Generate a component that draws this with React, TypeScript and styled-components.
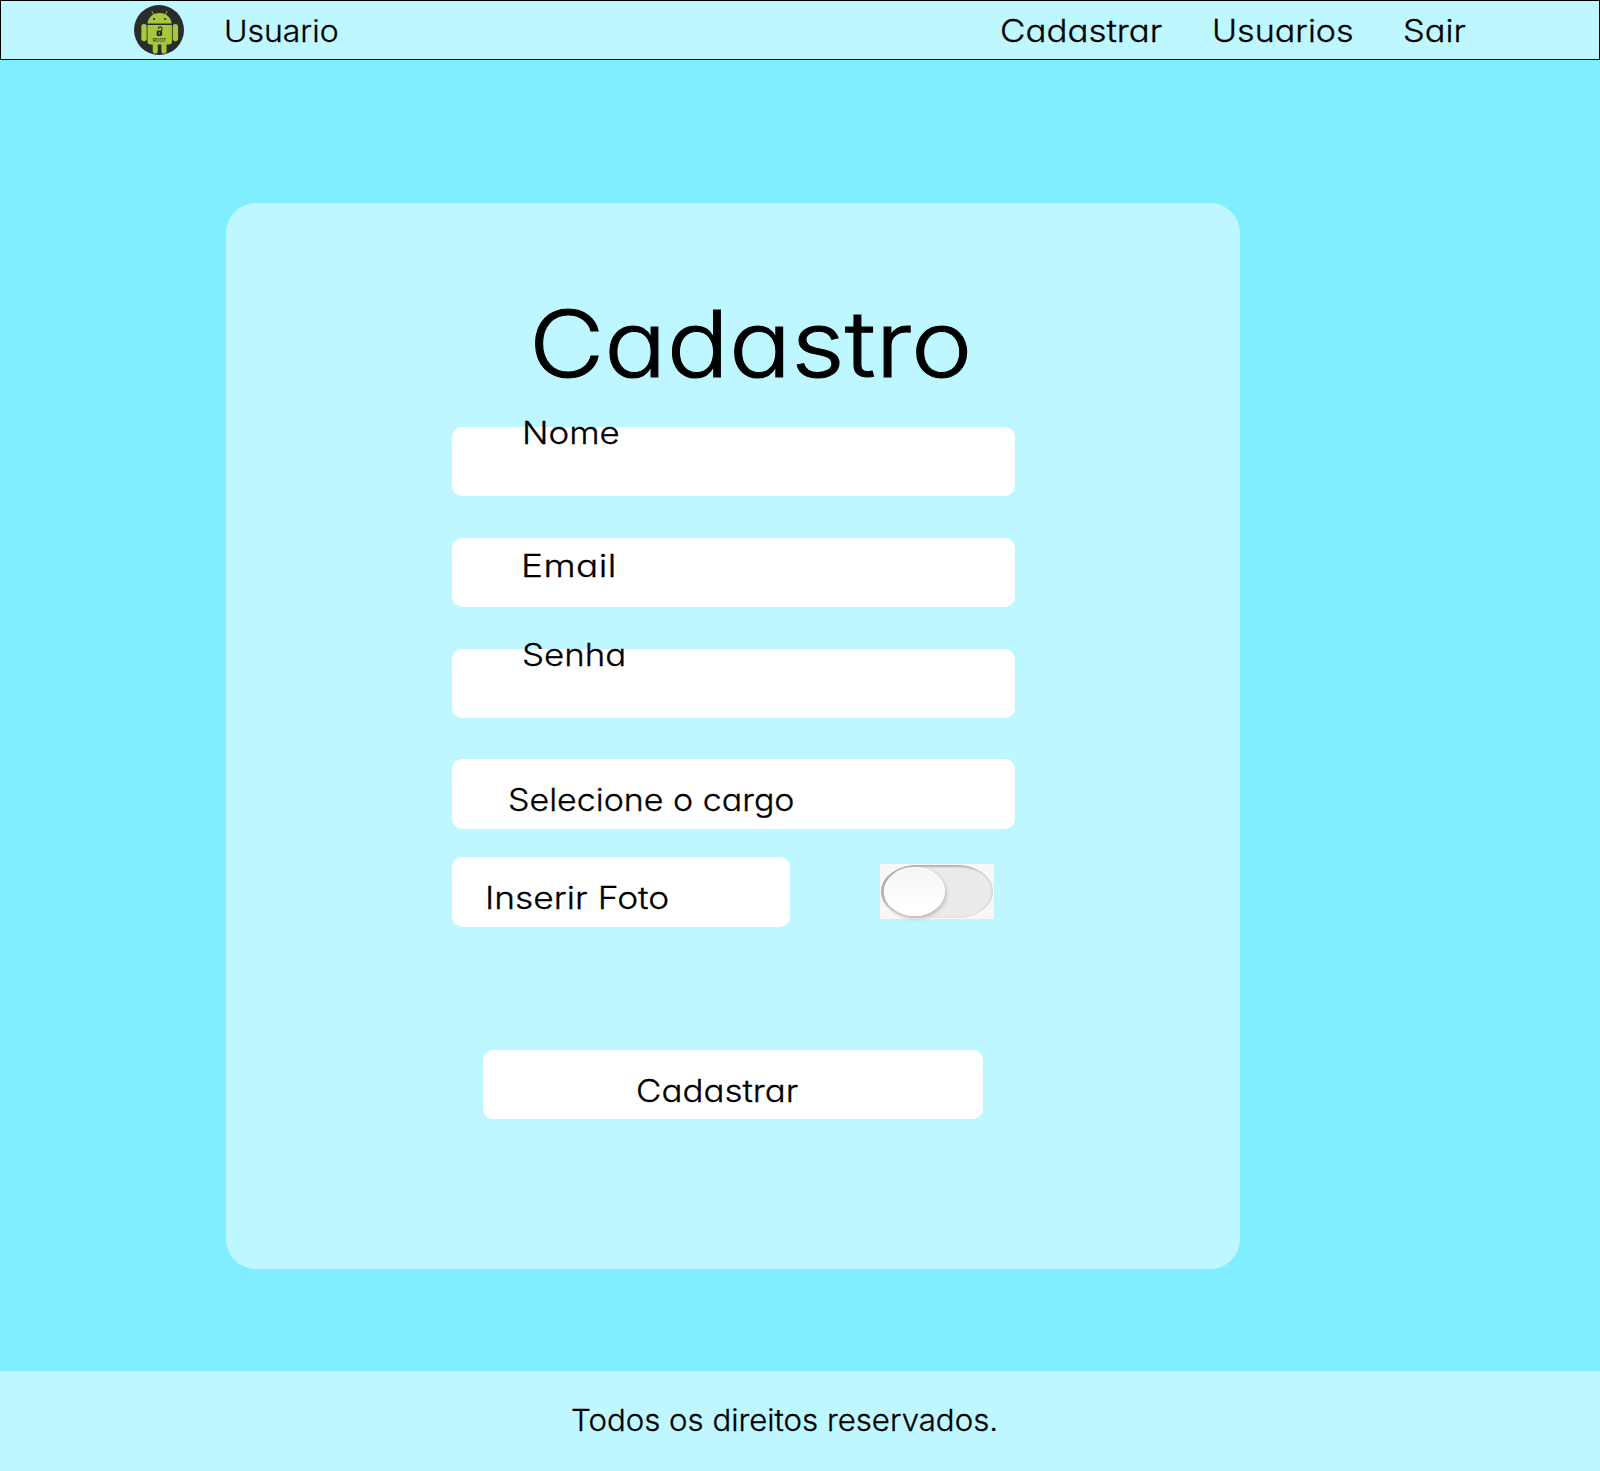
import React from "react";
import styled, { createGlobalStyle } from "styled-components";

const GlobalStyle = createGlobalStyle`
  *, *::before, *::after { box-sizing: border-box; }
  body {
    margin: 0;
    background: #80eeff;
    color: #000;
    font-family: Inter, "Open Sans", sans-serif;
  }
`;

const Page = styled.div`
  display: flex;
  flex-direction: column;
  width: 1600px;
  height: 1471px;
  background: #80eeff;
`;

const Text = styled.span<{ $spacing?: number; $stretch?: number; $alt?: boolean }>`
  display: block;
  font-size: ${(p) => (p.$alt === false ? 30 : 31)}px;
  font-weight: 300;
  -webkit-text-stroke: 0.3px currentColor;
  line-height: 40px;
  white-space: nowrap;
  font-feature-settings: ${(p) => (p.$alt === false ? "normal" : '"cv11" 1')};
  letter-spacing: ${(p) => p.$spacing ?? 0}px;
  transform: scaleX(${(p) => p.$stretch ?? 1.125});
  transform-origin: left center;
`;

const Header = styled.header`
  display: flex;
  align-items: flex-start;
  flex: none;
  height: 60px;
  padding-left: 133px;
  border: 1px solid #000;
  background: #bef7ff;
`;

const Avatar = styled.svg`
  flex: none;
  width: 50px;
  height: 50px;
  margin-top: 4px;
`;

const UserName = styled.div`
  width: 775.5px;
  margin: 10px 0 0 40px;
`;

const Nav = styled.nav`
  display: grid;
  grid-template-columns: 212px 191.5px auto;
  margin-top: 10px;
`;

const NavLink = styled.a`
  color: inherit;
  text-decoration: none;
`;

const Main = styled.main`
  flex: 1;
  padding: 143px 0 0 226px;
`;

const Card = styled.form`
  width: 1014px;
  height: 1066px;
  padding: 86px 225px 0 226px;
  border-radius: 30px;
  background: #bef7ff;
`;

const Title = styled.h1`
  height: 110px;
  margin: 0 0 28px 77px;
  font-size: 92px;
  font-weight: 300;
  -webkit-text-stroke: 1px currentColor;
  line-height: 110px;
  white-space: nowrap;
  font-feature-settings: "cv11" 1;
  transform: scaleX(1.125);
  transform-origin: left center;
`;

const Field = styled.div<{ $indent: number; $top: number; $gap: number; $height?: number }>`
  display: flex;
  align-items: flex-start;
  height: ${(p) => p.$height ?? 69}px;
  margin-bottom: ${(p) => p.$gap}px;
  padding-left: ${(p) => p.$indent}px;
  border-radius: 10px;
  background: #fff;

  > span { margin-top: ${(p) => p.$top}px; }
`;

const PhotoRow = styled.div`
  display: grid;
  grid-template-columns: 338px 114px;
  column-gap: 90px;
  height: 193px;
`;

const Toggle = styled.div`
  width: 114px;
  height: 55px;
  margin-top: 7px;
  padding: 1px;
  background: #f8f8f8;
`;

const Track = styled.div`
  height: 53px;
  padding: 2px 0 0 3px;
  border-radius: 37px / 27px;
  background: #ebebeb;
  box-shadow: inset 3px 2px 2px #b0b0b0, inset -1px 0 2px #cfcfcf;
`;

const Knob = styled.div`
  width: 61px;
  height: 49px;
  border: 1px solid #fff;
  border-radius: 50%;
  background: linear-gradient(#f5f5f5, #ffffff 75%);
  box-shadow: 1px 2px 4px #b4b4b4;
`;

const Submit = styled.button`
  display: block;
  width: 500px;
  height: 69px;
  margin-left: 31px;
  padding: 21px 0 0 153px;
  border: 0;
  border-radius: 10px;
  background: #fff;
  color: inherit;
  font-family: inherit;
  text-align: left;

  > span { height: 48px; }
`;

const Footer = styled.footer`
  flex: none;
  height: 100px;
  padding: 29px 0 0 571px;
  background: #bef7ff;
`;

function RootLogo() {
  return (
    <Avatar viewBox="0 0 50 50" aria-label="Root">
      <circle cx="25" cy="25" r="25" fill="#2a2b2b" />
      <g fill="#a4c93a">
        <path d="M13.6 18.6C14 12.3 18.8 8 25.5 8s11.7 4.3 12.1 10.6z" />
        <path d="M13.5 20h24.4v16.6a3 3 0 0 1-3 3H16.5a3 3 0 0 1-3-3z" />
        <rect x="7.3" y="19" width="5.4" height="17.2" rx="2.7" />
        <rect x="38.7" y="19" width="5.4" height="17.2" rx="2.7" />
        <path d="M18.7 38h5.1v8a2.5 2.5 0 0 1-5.1 0zM27.4 38h5.1v8a2.5 2.5 0 0 1-5.1 0z" />
      </g>
      <path d="M18 6.3l2 4M33 6.3l-2 4" stroke="#a4c93a" strokeWidth="0.9" strokeLinecap="round" />
      <circle cx="20.1" cy="14" r="1.1" fill="#2a2b2b" />
      <circle cx="31.2" cy="14" r="1.1" fill="#2a2b2b" />
      <rect x="22.6" y="25.6" width="5.6" height="5.4" rx="1.4" fill="#2a2b2b" />
      <path d="M24.4 23.8c.4-2.8 4-2.3 3.6.3l-.6 2" fill="none" stroke="#2a2b2b" strokeWidth="1.1" />
      <path d="M25.4 27.3v2" stroke="#a4c93a" strokeWidth="1" />
      <text x="25.4" y="36.8" textAnchor="middle" fontSize="4.8" fontWeight="500" fill="#2a2b2b">ROOT</text>
    </Avatar>
  );
}

export default function App() {
  return (
    <Page>
      <GlobalStyle />
      <Header>
        <RootLogo />
        <UserName><Text $alt={false} $stretch={1.065}>Usuario</Text></UserName>
        <Nav>
          <NavLink><Text>Cadastrar</Text></NavLink>
          <NavLink><Text $stretch={1.1}>Usuarios</Text></NavLink>
          <NavLink><Text $stretch={1.11}>Sair</Text></NavLink>
        </Nav>
      </Header>
      <Main>
        <Card>
          <Title>Cadastro</Title>
          <Field $indent={70} $top={-14} $gap={42}><Text>Nome</Text></Field>
          <Field $indent={69} $top={8} $gap={42}><Text $stretch={1.19} $spacing={0.4}>Email</Text></Field>
          <Field $indent={69.5} $top={-14} $gap={41}><Text>Senha</Text></Field>
          <Field $indent={56} $top={21} $gap={28} $height={70}><Text $stretch={1.096}>Selecione o cargo</Text></Field>
          <PhotoRow>
            <Field $indent={33} $top={21} $gap={0} $height={70}><Text $stretch={1.14}>Inserir Foto</Text></Field>
            <Toggle role="switch" aria-checked="false"><Track><Knob /></Track></Toggle>
          </PhotoRow>
          <Submit type="button"><Text>Cadastrar</Text></Submit>
        </Card>
      </Main>
      <Footer><Text $alt={false} $stretch={1.04}>Todos os direitos reservados.</Text></Footer>
    </Page>
  );
}
